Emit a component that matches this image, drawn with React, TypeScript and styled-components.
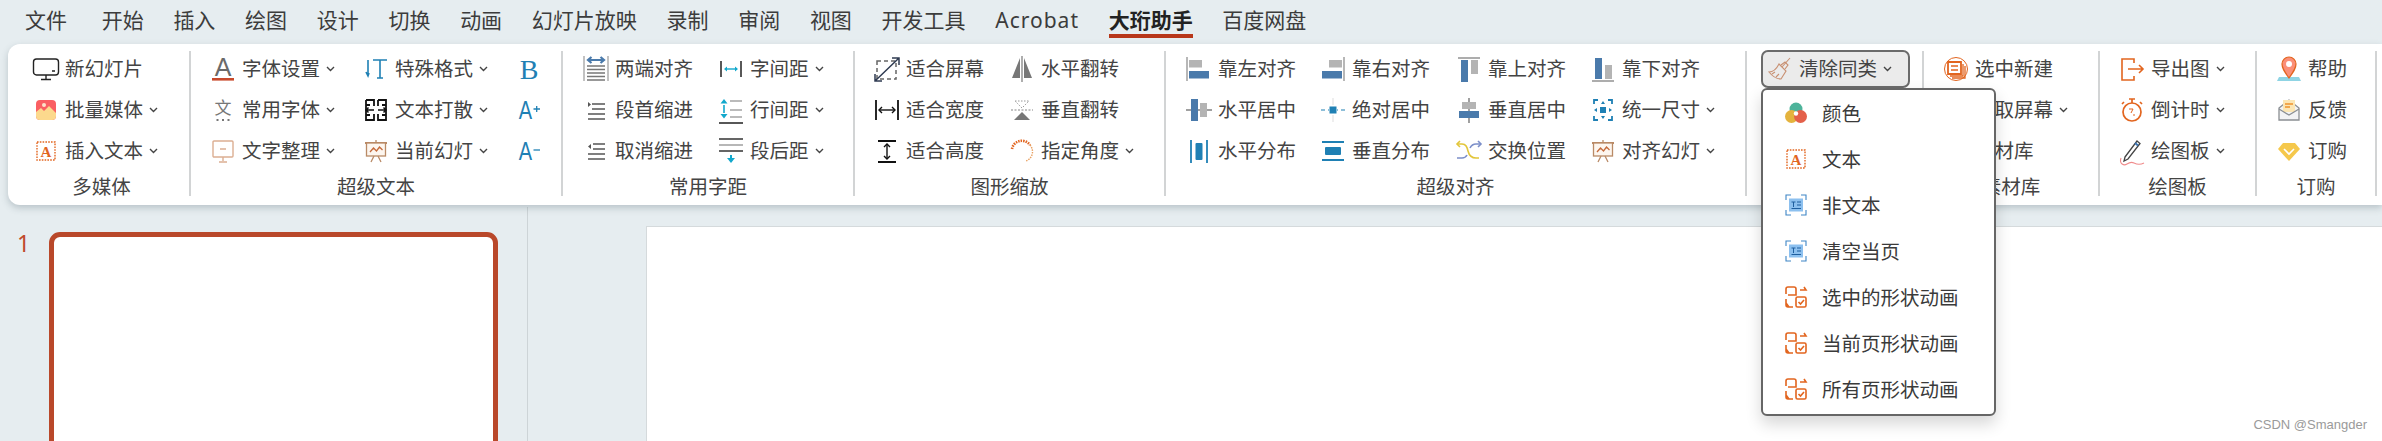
import React from 'react';
import styled, { createGlobalStyle } from 'styled-components';

const UI_FONT = '"Noto Sans", "Noto Sans CJK SC", sans-serif';

const GlobalStyle = createGlobalStyle`
  html, body {
    margin: 0;
    padding: 0;
    background: #e6edf0;
    font-family: ${UI_FONT};
  }
`;

// style
const Page = styled.div`
  width: 2382px;
  height: 441px;
  display: flex;
  flex-direction: column;
  overflow: hidden;
  background: #e6edf0;
`;

const MenuBar = styled.div`
  height: 44px;
  flex-shrink: 0;
  display: flex;
  align-items: flex-start;
  padding-left: 25px;
  gap: 29.7px;
`;

const MenuTab = styled.div<{ $active?: boolean; $first?: boolean; $latin?: boolean }>`
  height: 38px;
  line-height: 40px;
  font-size: 21px;
  white-space: nowrap;
  color: ${(props) => (props.$active ? '#222' : '#3c3c3c')};
  font-weight: ${(props) => (props.$active ? 700 : 400)};
  letter-spacing: ${(props) => (props.$latin ? '1px' : '0')};
  margin-right: ${(props) => (props.$first ? '5px' : '0')};
  border-bottom: ${(props) => (props.$active ? '4px solid #b8371a' : 'none')};
  box-sizing: border-box;
`;

const Ribbon = styled.div`
  height: 161px;
  flex-shrink: 0;
  margin-left: 8px;
  padding-left: 6px;
  display: flex;
  align-items: flex-start;
  background: #fff;
  border-radius: 12px 0 0 12px;
  box-shadow: 0 3px 7px rgba(70, 90, 100, 0.28);
  position: relative;
  z-index: 2;
`;

const Group = styled.div<{ $width: number; $paddingLeft: number }>`
  width: ${(props) => props.$width}px;
  height: 145px;
  margin-top: 7px;
  flex-shrink: 0;
  box-sizing: border-box;
  display: flex;
  flex-direction: column;
  border-right: 2px solid #d2d4d5;
  padding-left: ${(props) => props.$paddingLeft}px;
`;

const GroupBody = styled.div`
  height: 124.5px;
  margin-top: -3px;
  flex-shrink: 0;
  display: flex;
`;

const GroupLabel = styled.div<{ $paddingLeft: number }>`
  height: 30px;
  flex-shrink: 0;
  margin-left: -${(props) => props.$paddingLeft}px;
  line-height: 28px;
  text-align: center;
  font-size: 19.5px;
  color: #444;
`;

const Column = styled.div<{ $width?: number }>`
  width: ${(props) => (props.$width ? `${props.$width}px` : 'auto')};
  flex-shrink: 0;
  display: flex;
  flex-direction: column;
`;

const Cell = styled.div`
  height: 41.3px;
  flex-shrink: 0;
  display: flex;
  align-items: center;
  white-space: nowrap;
  font-size: 19.5px;
  color: #444;
`;

const IconSlot = styled.svg`
  width: 26px;
  height: 26px;
  flex-shrink: 0;
  overflow: visible;
`;

const CellText = styled.span`
  margin-left: 6px;
  margin-bottom: 3px;
`;

const Chevron = styled.svg`
  width: 9px;
  height: 6px;
  margin-left: 6px;
  flex-shrink: 0;
`;

const CleanerWrap = styled.div`
  position: relative;
  margin-top: 2px;
`;

const CleanerButton = styled.div`
  width: 149px;
  height: 38px;
  box-sizing: border-box;
  display: flex;
  align-items: center;
  padding-left: 4px;
  border: 2px solid #6b6b6b;
  border-radius: 7px;
  background: #ebebeb;
  font-size: 19.5px;
  color: #444;
  white-space: nowrap;
`;

const Dropdown = styled.div`
  position: absolute;
  top: 38px;
  left: 0;
  width: 235px;
  height: 328px;
  box-sizing: border-box;
  border: 2px solid #666;
  border-radius: 6px;
  background: #fff;
  box-shadow: 0 8px 16px rgba(0, 0, 0, 0.16);
`;

const DropdownItem = styled.div`
  height: 46px;
  display: flex;
  align-items: center;
  padding-left: 20px;
  font-size: 19.5px;
  color: #3a3a3a;
  white-space: nowrap;
`;

const DropdownText = styled.span`
  margin-left: 13px;
  margin-bottom: 1px;
`;

const Workspace = styled.div`
  flex: 1;
  min-height: 0;
  display: flex;
`;

const SlidePanel = styled.div`
  width: 528px;
  flex-shrink: 0;
  box-sizing: border-box;
  margin-top: 2px;
  padding: 25px 0 0 15px;
  display: flex;
  align-items: flex-start;
  border-right: 1px solid #cdd4d7;
  overflow: hidden;
`;

const SlideNumber = styled.div`
  width: 34px;
  flex-shrink: 0;
  font-size: 23px;
  line-height: 22px;
  padding-left: 2px;
  box-sizing: border-box;
  color: #c0492b;
`;

const Thumbnail = styled.div`
  width: 449px;
  height: 320px;
  flex-shrink: 0;
  box-sizing: border-box;
  background: #fff;
  border: 5px solid #b9482a;
  border-radius: 11px;
`;

const Editor = styled.div`
  flex: 1;
  padding: 21px 0 0 118px;
  display: flex;
`;

const Slide = styled.div`
  flex: 1;
  background: #fff;
  border-top: 1px solid #d5dadc;
  border-left: 1px solid #d5dadc;
  position: relative;
`;

const Watermark = styled.div`
  position: absolute;
  right: 15px;
  bottom: 9px;
  font-family: "Liberation Sans", sans-serif;
  font-size: 13px;
  color: #9a9a9a;
`;

const BLUE = '#4a7aab';
const GRAY = '#b4b4b4';
const TEAL = '#1f80b4';
const CYAN = '#12a8cc';
const ORANGE = '#e2651f';
const TAN = '#b98a66';

const boardIcon = (
  <g fill="none" stroke={TAN} strokeWidth="1.3">
    <path d="M2 5h22" strokeWidth="2" />
    <rect x="3.5" y="5" width="19" height="13" fill="#fdf6ef" />
    <path d="M7 14l3.5-4 3 3 3-4 3 3" stroke="#c46a3a" />
    <path d="M8 24l3-6M18 24l-3-6M13 2v3" />
  </g>
);

const charIcon = (label: string, size: number, fill: string, family = 'Liberation Sans', weight = 400, x = 13, y = 20) => (
  <text x={x} y={y} fontFamily={family} fontSize={size} fontWeight={weight} fill={fill} textAnchor="middle">{label}</text>
);

const dottedTextIcon = (
  <g>
    <rect x="4" y="4" width="18" height="18" fill="none" stroke={ORANGE} strokeWidth="1.4" strokeDasharray="1.6 1.2" />
    {charIcon('A', 15, ORANGE, 'Liberation Serif', 700, 13, 18.5)}
  </g>
);

const frameIcon = (
  <g>
    <path d="M3 8V3h5M18 3h5v5M23 18v5h-5M8 23H3v-5" fill="none" stroke="#3f86c6" strokeWidth="1.1" />
    <rect x="6" y="6.5" width="14" height="13" fill="#8cc0ef" />
    <path d="M8.5 10h4M14 10h4M10.5 10v5M14 13h4M8.5 16.500h9.500" stroke="#1f5f9f" strokeWidth="1" />
  </g>
);

const animationIcon = (
  <g fill="none" stroke={ORANGE} strokeWidth="1.6">
    <path d="M3 10V5a2 2 0 0 1 2-2h6a2 2 0 0 1 2 2v6H5" />
    <rect x="13" y="13" width="10" height="10" rx="1.5" />
    <path d="M15.5 18l2 2 3.5-4" />
    <path d="M17 6h6M21 3l2 3-2 0M3 15v6a2 2 0 0 0 2 2h5M3 19l3 4" />
  </g>
);

const ICONS: Record<string, React.ReactNode> = {
  monitor: (
    <g fill="none" stroke="#222" strokeWidth="1.4">
      <rect x="0.5" y="3" width="25" height="16" rx="3" />
      <path d="M19 15h3M13 19v4M8 23.5h10" />
    </g>
  ),
  media: (
    <g>
      <rect x="3" y="3" width="20" height="20" rx="4" fill="#fa5f62" />
      <path d="M3 15l5-4 3 3 5-5 7 7v3a4 4 0 0 1-4 4H7a4 4 0 0 1-4-4z" fill="#fcd98d" />
      <circle cx="11" cy="8" r="2" fill="#fde3c8" />
    </g>
  ),
  dottedText: dottedTextIcon,
  fontA: (
    <g>
      {charIcon('A', 25, '#6a6a6a', 'Liberation Sans', 400, 13, 20)}
      <rect x="2" y="22" width="22" height="2.6" fill="#c8492b" />
    </g>
  ),
  commonFont: (
    <g>
      {charIcon('文', 17, '#777', 'Noto Sans CJK SC', 400, 13, 17)}
      <path d="M6.5 23h2M12 23h2M17.5 23h2" stroke="#777" strokeWidth="2" />
    </g>
  ),
  tidy: (
    <g fill="none" stroke="#dcae92" strokeWidth="1.4">
      <rect x="3" y="3" width="20" height="16" rx="1" />
      <path d="M10 11h6M13 19v4M9 24h8" />
    </g>
  ),
  special: (
    <g fill="none" stroke={TEAL} strokeWidth="1.6">
      <path d="M5 4v15M3 16l2 4 1-3M10 4h14M17 4v18M14 22h6" />
    </g>
  ),
  scatter: (
    <g fill="none" stroke="#111" strokeWidth="1.8">
      <path d="M3 3h8v6M3 3v20h8v-6M15 3h8v20h-8v-6M15 3v6" />
      <path d="M3 8h4M3 18h4M19 8h4M19 18h4" />
      <path d="M3 13h8M5.500 10.500L3 13l2.500 2.500M23 13h-8M20.500 10.500L23 13l-2.500 2.500" strokeWidth="1.5" />
    </g>
  ),
  board: boardIcon,
  bold: charIcon('B', 28, TEAL, 'Liberation Serif', 400, 13, 23),
  grow: (
    <g>
      <text x="0" y="0" transform="translate(9.500 22) scale(0.8 1)" fontFamily="Liberation Sans" fontSize="25" fill={TEAL} textAnchor="middle">A</text>
      <path d="M17.500 12h6.500M20.700 9v6" stroke={TEAL} strokeWidth="1.3" />
    </g>
  ),
  shrink: (
    <g>
      <text x="0" y="0" transform="translate(9.500 22) scale(0.8 1)" fontFamily="Liberation Sans" fontSize="25" fill={TEAL} textAnchor="middle">A</text>
      <path d="M17.500 12h6.500" stroke={TEAL} strokeWidth="1.3" />
    </g>
  ),
  justify: (
    <g>
      <path d="M1 0v25M25 0v25" stroke="#9a9a9a" strokeWidth="1.2" />
      <path d="M4 10h18M4 13.5h18M4 17h18M4 20.5h18M4 24h18" stroke="#777" strokeWidth="1.5" />
      <path d="M6 4h14M8.5 1L5 4l3.5 3M17.5 1L21 4l-3.5 3" fill="none" stroke={BLUE} strokeWidth="2.2" />
    </g>
  ),
  indent: (
    <g>
      <path d="M9 7h13M9 12h13M5 17h17M5 22h17" stroke="#555" strokeWidth="1.5" />
      <path d="M5 5l3 2.500-3 2.500z" fill="#555" />
    </g>
  ),
  outdent: (
    <g>
      <path d="M10 6h12M10 11h12M5 16h17M5 21h17" stroke="#555" strokeWidth="1.5" />
      <path d="M8 6L5 8.500 8 11z" fill="#555" />
    </g>
  ),
  charSpace: (
    <g>
      <path d="M3 5v16M23 5v16" stroke="#222" strokeWidth="1.5" />
      <path d="M7 13h12" stroke={CYAN} strokeWidth="1.4" />
      <path d="M9 10.500L6 13l3 2.500zM17 10.500l3 2.500-3 2.500z" fill={CYAN} />
    </g>
  ),
  lineSpace: (
    <g>
      <path d="M12 4h12M12 13h12M12 20h12" stroke="#777" strokeWidth="1.2" />
      <path d="M6 8v8" stroke={CYAN} strokeWidth="1.6" />
      <path d="M2.500 6.500L6 2l3.500 4.500zM2.500 17L6 21.500 9.500 17z" fill={CYAN} />
      <path d="M1 26h24" stroke="#444" strokeWidth="1.8" />
    </g>
  ),
  paraAfter: (
    <g>
      <path d="M1 1h24M1 13h24" stroke="#333" strokeWidth="1.4" />
      <path d="M1 7h24" stroke="#888" strokeWidth="1.2" />
      <path d="M13 17v4" stroke={CYAN} strokeWidth="2" />
      <path d="M9 20h8l-4 5z" fill={CYAN} />
    </g>
  ),
  fitScreen: (
    <g fill="none" stroke="#2f3b52" strokeWidth="1.5">
      <rect x="3" y="5" width="19" height="18" strokeDasharray="4 3" stroke="#666" />
      <path d="M1 25L25 2M18 2h7v7M1 18v7h7" />
    </g>
  ),
  flipH: (
    <g>
      <path d="M13 0v26" stroke="#777" strokeWidth="1.2" />
      <path d="M11 2v20H3zM15 2v20h8z" fill="#777" />
    </g>
  ),
  fitWidth: (
    <g stroke="#111" fill="none">
      <path d="M2 3v20M24 3v20" strokeWidth="1.8" />
      <path d="M5 13h16" strokeWidth="1.4" />
      <path d="M8 10l-3 3 3 3M18 10l3 3-3 3" strokeWidth="1.4" />
    </g>
  ),
  flipV: (
    <g>
      <path d="M2 13h22" stroke="#888" strokeWidth="1.2" strokeDasharray="2 1.500" />
      <path d="M6 4h14l-7 7z" fill="none" stroke="#999" strokeWidth="1" strokeDasharray="1.500 1.500" />
      <path d="M5 23h16l-8-8z" fill="#777" />
    </g>
  ),
  fitHeight: (
    <g stroke="#111" fill="none">
      <path d="M4 3h18M4 24h18" strokeWidth="1.8" />
      <path d="M13 6v15" strokeWidth="1.4" />
      <path d="M10 9l3-3 3 3M10 18l3 3 3-3" strokeWidth="1.4" />
    </g>
  ),
  angle: (
    <g fill="none">
      <path d="M3 11A10 10 0 0 1 21 7" stroke={ORANGE} strokeWidth="2.6" strokeDasharray="1.500 1" />
      <path d="M21 7A10 10 0 0 1 17 23" stroke="#e8a061" strokeWidth="1.4" strokeDasharray="1.500 1" />
    </g>
  ),
  alignLeft: (
    <g>
      <path d="M1 1v24" stroke="#999" strokeWidth="1.4" />
      <rect x="3" y="4" width="13" height="7.500" fill={GRAY} />
      <rect x="3" y="15" width="20" height="7.500" fill={BLUE} />
    </g>
  ),
  alignRight: (
    <g>
      <path d="M24 1v24" stroke="#999" strokeWidth="1.4" />
      <rect x="9" y="4" width="13" height="7.500" fill={GRAY} />
      <rect x="2" y="15" width="20" height="7.500" fill={BLUE} />
    </g>
  ),
  alignTop: (
    <g>
      <path d="M2 2h22" stroke="#999" strokeWidth="1.600" />
      <rect x="5" y="4" width="7" height="22" fill={BLUE} />
      <rect x="15" y="4" width="7" height="14" fill={GRAY} />
    </g>
  ),
  alignBottom: (
    <g>
      <path d="M2 25h22" stroke="#999" strokeWidth="1.600" />
      <rect x="5" y="2" width="7" height="21" fill={BLUE} />
      <rect x="15" y="9" width="7" height="14" fill={GRAY} />
    </g>
  ),
  centerH: (
    <g>
      <path d="M0 13h26" stroke="#777" strokeWidth="1.400" />
      <rect x="5" y="2" width="7" height="22" fill={BLUE} />
      <rect x="14" y="6" width="7" height="14" fill={GRAY} />
    </g>
  ),
  centerAbs: (
    <g>
      <path d="M1 13h4M8 13h1M17 13h1M21 13h4" stroke={TEAL} strokeWidth="1.200" />
      <path d="M13 1v7M13 18v7" stroke="#ddd" strokeWidth="1" />
      <rect x="9.500" y="9.500" width="7" height="7" fill={TEAL} />
    </g>
  ),
  centerV: (
    <g>
      <path d="M13 1v25" stroke="#777" strokeWidth="1.400" />
      <rect x="6" y="5" width="14" height="7" fill={GRAY} />
      <rect x="3" y="14" width="20" height="7" fill={BLUE} />
    </g>
  ),
  unify: (
    <g>
      <path d="M4 7V3h4M18 3h4v4M22 19v4h-4M8 23H4v-4" fill="none" stroke={TEAL} strokeWidth="1.800" />
      <rect x="10" y="10" width="6" height="6" fill={TEAL} />
      <path d="M13 4l-2 3h4zM13 22l-2-3h4zM4 13l3-2v4zM22 13l-3-2v4z" fill={TEAL} />
    </g>
  ),
  distH: (
    <g>
      <path d="M5 2v23M21 2v23" stroke={TEAL} strokeWidth="1.800" />
      <rect x="9.500" y="5" width="7" height="17" rx="1" fill={TEAL} />
    </g>
  ),
  distV: (
    <g>
      <path d="M2 4h22M2 22h22" stroke={TEAL} strokeWidth="2" />
      <rect x="5" y="9" width="16" height="8" rx="1" fill={TEAL} />
    </g>
  ),
  swap: (
    <g fill="none" strokeWidth="1.600">
      <path d="M1 6h5c4 0 5 3 6 7 1 4 3 7 8 7h3" stroke="#e2c63a" />
      <path d="M25 6h-5c-3 0-5 2-6 4" stroke="#7c8fc9" />
      <path d="M1 20h5c2 0 4-1 5-3" stroke="#7c8fc9" />
      <path d="M4 3L1 6l3 3" stroke="#e2c63a" />
      <path d="M22 3l3 3-3 3" stroke="#7c8fc9" />
    </g>
  ),
  broom: (
    <g fill="none" stroke="#c89072" strokeWidth="1.100">
      <path d="M23 2l-8 9M12 8l7 7-5 8c-3 0-8-2-12-7 3 0 7-2 10-8zM5 18l3-2M9 21l3-3" />
      <path d="M14 9l4-3 3 3-3 4" />
    </g>
  ),
  newSelect: (
    <g fill="none" stroke={ORANGE}>
      <circle cx="13" cy="13" r="11.500" strokeWidth="1" />
      <path d="M5 6h13v12H5z" fill="#fff" strokeWidth="1.800" />
      <path d="M8 10h7M8 14h7" strokeWidth="1.300" />
      <path d="M7 20h13V8M9 22h13V10" strokeWidth="1.300" />
    </g>
  ),
  exportImg: (
    <g fill="none" stroke={ORANGE} strokeWidth="1.600">
      <path d="M15 7V3H3v21h12v-4" />
      <path d="M9 13h15M20 9l4 4-4 4" />
    </g>
  ),
  timer: (
    <g fill="none" stroke={ORANGE} strokeWidth="1.700">
      <circle cx="13" cy="15" r="9" />
      <path d="M10 2h6M13 2v4M21 5l2 2M5 5L3 7" />
      <path d="M10 12h4l-2 4M15 17v2" strokeWidth="1" />
    </g>
  ),
  pen: (
    <g fill="none">
      <path d="M6 19L18 3l3 2.500L9 21l-4 2z" stroke="#444" strokeWidth="1.300" />
      <path d="M16 5l3 2.500" stroke="#3a74b3" strokeWidth="2" />
      <path d="M2 20c-2 6 3 8 6 6s5-2 7-1 6 2 10 0" stroke="#f08c8c" strokeWidth="1.100" />
    </g>
  ),
  help: (
    <g>
      <path d="M3 21h20l2 4H1z" fill="#8fd4e4" />
      <path d="M13 22C8 15 6 12 6 8a7 7 0 0 1 14 0c0 4-2 7-7 14z" fill="#fb8f78" stroke="#e2651f" strokeWidth="1.200" />
      <circle cx="13" cy="8" r="3" fill="#fff" />
    </g>
  ),
  feedback: (
    <g>
      <path d="M3 11l10-8 10 8v12H3z" fill="#f2f3f4" stroke="#8b8f93" strokeWidth="1.300" />
      <rect x="7" y="3" width="12" height="12" fill="#fbe6b4" />
      <path d="M9 7h8M9 10h5" stroke="#f0932b" strokeWidth="1.500" />
      <path d="M3 12l10 6 10-6" fill="none" stroke="#8b8f93" strokeWidth="1.300" />
    </g>
  ),
  order: (
    <g>
      <path d="M7 5h12l5 6-11 12L2 11z" fill="#f5c84c" />
      <path d="M8 11l5 5 5-5" fill="none" stroke="#fff" strokeWidth="1.600" />
    </g>
  ),
  color: (
    <g>
      <circle cx="13" cy="9" r="6.500" fill="#4db39a" />
      <circle cx="8.500" cy="16.500" r="6.500" fill="#e4b33d" />
      <circle cx="17.500" cy="16.500" r="6.500" fill="#e4604a" />
      <circle cx="13" cy="13.500" r="2.200" fill="#fff" />
    </g>
  ),
  frame: frameIcon,
  animation: animationIcon,
};

const Icon = ({ name }: { name: string }) => (
  <IconSlot viewBox="0 0 26 26">{ICONS[name]}</IconSlot>
);

const DownChevron = () => (
  <Chevron viewBox="0 0 9 6">
    <path d="M1 1l3.500 3.500L8 1" fill="none" stroke="#444" strokeWidth="1.400" />
  </Chevron>
);

interface Tool {
  icon?: string;
  text?: string;
  menu?: boolean;
}

interface ToolColumn {
  width?: number;
  tools: Tool[];
}

interface RibbonGroup {
  width: number;
  paddingLeft: number;
  label: string;
  columns: ToolColumn[];
}

const tabs = ['文件', '开始', '插入', '绘图', '设计', '切换', '动画', '幻灯片放映', '录制', '审阅', '视图', '开发工具', 'Acrobat', '大珩助手', '百度网盘'];

const groupsBefore: RibbonGroup[] = [
  {
    width: 177,
    paddingLeft: 19,
    label: '多媒体',
    columns: [{
      tools: [
        { icon: 'monitor', text: '新幻灯片' },
        { icon: 'media', text: '批量媒体', menu: true },
        { icon: 'dottedText', text: '插入文本', menu: true },
      ],
    }],
  },
  {
    width: 372,
    paddingLeft: 19,
    label: '超级文本',
    columns: [
      {
        width: 153,
        tools: [
          { icon: 'fontA', text: '字体设置', menu: true },
          { icon: 'commonFont', text: '常用字体', menu: true },
          { icon: 'tidy', text: '文字整理', menu: true },
        ],
      },
      {
        width: 153,
        tools: [
          { icon: 'special', text: '特殊格式', menu: true },
          { icon: 'scatter', text: '文本打散', menu: true },
          { icon: 'board', text: '当前幻灯', menu: true },
        ],
      },
      { tools: [{ icon: 'bold' }, { icon: 'grow' }, { icon: 'shrink' }] },
    ],
  },
  {
    width: 292,
    paddingLeft: 20,
    label: '常用字距',
    columns: [
      {
        width: 135,
        tools: [
          { icon: 'justify', text: '两端对齐' },
          { icon: 'indent', text: '段首缩进' },
          { icon: 'outdent', text: '取消缩进' },
        ],
      },
      {
        tools: [
          { icon: 'charSpace', text: '字间距', menu: true },
          { icon: 'lineSpace', text: '行间距', menu: true },
          { icon: 'paraAfter', text: '段后距', menu: true },
        ],
      },
    ],
  },
  {
    width: 311,
    paddingLeft: 19,
    label: '图形缩放',
    columns: [
      {
        width: 135,
        tools: [
          { icon: 'fitScreen', text: '适合屏幕' },
          { icon: 'fitWidth', text: '适合宽度' },
          { icon: 'fitHeight', text: '适合高度' },
        ],
      },
      {
        tools: [
          { icon: 'flipH', text: '水平翻转' },
          { icon: 'flipV', text: '垂直翻转' },
          { icon: 'angle', text: '指定角度', menu: true },
        ],
      },
    ],
  },
  {
    width: 581,
    paddingLeft: 20,
    label: '超级对齐',
    columns: [
      {
        width: 134,
        tools: [
          { icon: 'alignLeft', text: '靠左对齐' },
          { icon: 'centerH', text: '水平居中' },
          { icon: 'distH', text: '水平分布' },
        ],
      },
      {
        width: 136,
        tools: [
          { icon: 'alignRight', text: '靠右对齐' },
          { icon: 'centerAbs', text: '绝对居中' },
          { icon: 'distV', text: '垂直分布' },
        ],
      },
      {
        width: 134,
        tools: [
          { icon: 'alignTop', text: '靠上对齐' },
          { icon: 'centerV', text: '垂直居中' },
          { icon: 'swap', text: '交换位置' },
        ],
      },
      {
        tools: [
          { icon: 'alignBottom', text: '靠下对齐' },
          { icon: 'unify', text: '统一尺寸', menu: true },
          { icon: 'board', text: '对齐幻灯', menu: true },
        ],
      },
    ],
  },
];

const groupsAfter: RibbonGroup[] = [
  {
    width: 176,
    paddingLeft: 19,
    label: '素材库',
    columns: [{
      tools: [
        { icon: 'newSelect', text: '选中新建' },
        { icon: 'exportImg', text: '截取屏幕', menu: true },
        { icon: 'newSelect', text: '素材库' },
      ],
    }],
  },
  {
    width: 157,
    paddingLeft: 19,
    label: '绘图板',
    columns: [{
      tools: [
        { icon: 'exportImg', text: '导出图', menu: true },
        { icon: 'timer', text: '倒计时', menu: true },
        { icon: 'pen', text: '绘图板', menu: true },
      ],
    }],
  },
  {
    width: 120,
    paddingLeft: 19,
    label: '订购',
    columns: [{
      tools: [
        { icon: 'help', text: '帮助' },
        { icon: 'feedback', text: '反馈' },
        { icon: 'order', text: '订购' },
      ],
    }],
  },
];

const dropdownItems = [
  { icon: 'color', text: '颜色' },
  { icon: 'dottedText', text: '文本' },
  { icon: 'frame', text: '非文本' },
  { icon: 'frame', text: '清空当页' },
  { icon: 'animation', text: '选中的形状动画' },
  { icon: 'animation', text: '当前页形状动画' },
  { icon: 'animation', text: '所有页形状动画' },
];

const renderGroup = (group: RibbonGroup) => (
  <Group key={group.label} $width={group.width} $paddingLeft={group.paddingLeft}>
    <GroupBody>
      {group.columns.map((column, columnIndex) => (
        <Column key={columnIndex} $width={column.width}>
          {column.tools.map((tool, toolIndex) => (
            <Cell key={toolIndex}>
              {tool.icon && <Icon name={tool.icon} />}
              {tool.text && <CellText>{tool.text}</CellText>}
              {tool.menu && <DownChevron />}
            </Cell>
          ))}
        </Column>
      ))}
    </GroupBody>
    <GroupLabel $paddingLeft={group.paddingLeft}>{group.label}</GroupLabel>
  </Group>
);

export default function App() {
  return (
    <Page>
      <GlobalStyle />
      <MenuBar>
        {tabs.map((tab, index) => (
          <MenuTab key={tab} $first={index === 0} $latin={tab === 'Acrobat'} $active={tab === '大珩助手'}>{tab}</MenuTab>
        ))}
      </MenuBar>

      <Ribbon>
        {groupsBefore.map(renderGroup)}

        <Group $width={177} $paddingLeft={14}>
          <GroupBody>
            <CleanerWrap>
              <CleanerButton>
                <Icon name="broom" />
                <CellText>清除同类</CellText>
                <DownChevron />
              </CleanerButton>
              <Dropdown>
                {dropdownItems.map((item) => (
                  <DropdownItem key={item.text}>
                    <Icon name={item.icon} />
                    <DropdownText>{item.text}</DropdownText>
                  </DropdownItem>
                ))}
              </Dropdown>
            </CleanerWrap>
          </GroupBody>
        </Group>

        {groupsAfter.map(renderGroup)}
      </Ribbon>

      <Workspace>
        <SlidePanel>
          <SlideNumber>1</SlideNumber>
          <Thumbnail />
        </SlidePanel>
        <Editor>
          <Slide>
            <Watermark>CSDN @Smangder</Watermark>
          </Slide>
        </Editor>
      </Workspace>
    </Page>
  );
}
